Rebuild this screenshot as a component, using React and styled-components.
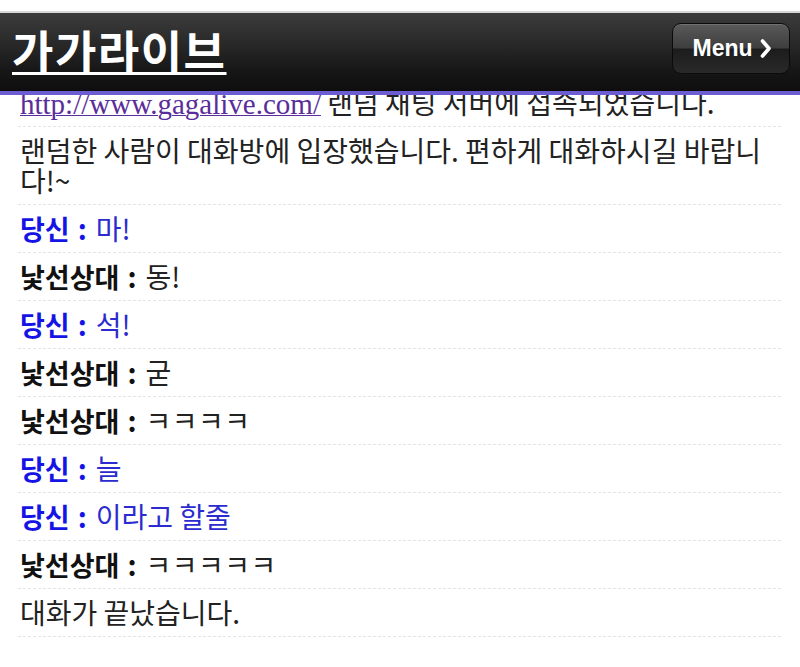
import React from "react";
import styled, { createGlobalStyle } from "styled-components";

const Global = createGlobalStyle`
  html, body {
    margin: 0;
    padding: 0;
    background: #ffffff;
  }
  body {
    font-family: "Noto Sans CJK KR", sans-serif;
  }
`;

const Header = styled.header`
  position: fixed;
  top: 11px;
  left: 0;
  right: 0;
  z-index: 2;
  height: 78px;
  border-top: 2px solid #d8d8d8;
  border-bottom: 4px solid #6c5ed2;
  background: linear-gradient(to bottom, #3c3c3c 0%, #262626 45%, #161616 75%, #0e0e0e 100%);
  display: flex;
  align-items: center;
  justify-content: space-between;
  padding: 0 10px 0 12px;
  box-sizing: content-box;
`;

const Title = styled.a`
  font-family: "Noto Sans CJK KR", sans-serif;
  font-weight: 700;
  font-size: 45px;
  line-height: 1;
  color: #ffffff;
  text-decoration: underline;
  text-decoration-thickness: 3px;
  text-underline-offset: 3px;
  letter-spacing: 1.5px;
  margin-top: -6px;
`;

const MenuButton = styled.button`
  width: 118px;
  height: 51px;
  margin-top: -8px;
  border: 1px solid #0a0a0a;
  border-radius: 9px;
  background: linear-gradient(
    to bottom,
    #5a5a5a 0%,
    #3e3e3e 48%,
    #1c1c1c 52%,
    #2a2a2a 100%
  );
  box-shadow: inset 0 1px 0 rgba(255, 255, 255, 0.15);
  color: #ffffff;
  font-family: "Liberation Sans", Arial, sans-serif;
  font-weight: 700;
  font-size: 23px;
  display: flex;
  align-items: center;
  justify-content: center;
  gap: 7px;
  padding: 0 0 0 2px;
`;

const Chevron = styled.svg`
  width: 12px;
  height: 19px;
`;

const Log = styled.ul`
  list-style: none;
  margin: 79px 0 0;
  padding: 0 19px 0 18px;
`;

const Row = styled.li`
  padding: 8px 0 9px 2px;
  border-bottom: 1px dashed #e4e4e4;
  font-family: "Noto Sans CJK KR", sans-serif;
  font-size: 28px;
  line-height: 30px;
  color: #222222;
`;

/* inline parts keep a short line box so the row's own strut sets its height */
const Link = styled.a`
  font-family: "Liberation Serif", "Noto Sans CJK KR", serif;
  font-size: 29px;
  line-height: 20px;
  color: #5a2e9a;
  text-decoration: underline;
  text-decoration-thickness: 1px;
`;

const Name = styled.b`
  font-weight: 700;
  font-size: 27px;
  line-height: 20px;
  color: ${(p) => (p.$me ? "#1414e6" : "#111111")};
`;

const Sep = styled.span`
  font-weight: 700;
  line-height: 20px;
  color: ${(p) => (p.$me ? "#1414e6" : "#111111")};
  margin: 0 9px 0 8px;
`;

const Msg = styled.span`
  line-height: 20px;
  color: ${(p) => (p.$me ? "#2b2bd0" : "#222222")};
  letter-spacing: ${(p) => (p.$laugh ? "0.5px" : "0")};
`;

const messages = [
  { me: true, text: "마!" },
  { me: false, text: "동!" },
  { me: true, text: "석!" },
  { me: false, text: "굳" },
  { me: false, text: "ㅋㅋㅋㅋ", laugh: true },
  { me: true, text: "늘" },
  { me: true, text: "이라고 할줄" },
  { me: false, text: "ㅋㅋㅋㅋㅋ", laugh: true },
];

export default function App() {
  return (
    <>
      <Global />
      <Header>
        <Title href="#">가가라이브</Title>
        <MenuButton>
          Menu
          <Chevron viewBox="0 0 12 19">
            <path d="M2.5 2 L9 9.5 L2.5 17" fill="none" stroke="#fff" strokeWidth="3.6" strokeLinecap="round" strokeLinejoin="round" />
          </Chevron>
        </MenuButton>
      </Header>
      <Log>
        <Row>
          <Link href="#">http://www.gagalive.com/</Link> 랜덤 채팅 서버에 접속되었습니다.
        </Row>
        <Row>랜덤한 사람이 대화방에 입장했습니다. 편하게 대화하시길 바랍니다!~</Row>
        {messages.map((m, i) => (
          <Row key={i}>
            <Name $me={m.me}>{m.me ? "당신" : "낯선상대"}</Name>
            <Sep $me={m.me}>:</Sep>
            <Msg $me={m.me} $laugh={m.laugh}>{m.text}</Msg>
          </Row>
        ))}
        <Row>대화가 끝났습니다.</Row>
      </Log>
    </>
  );
}
